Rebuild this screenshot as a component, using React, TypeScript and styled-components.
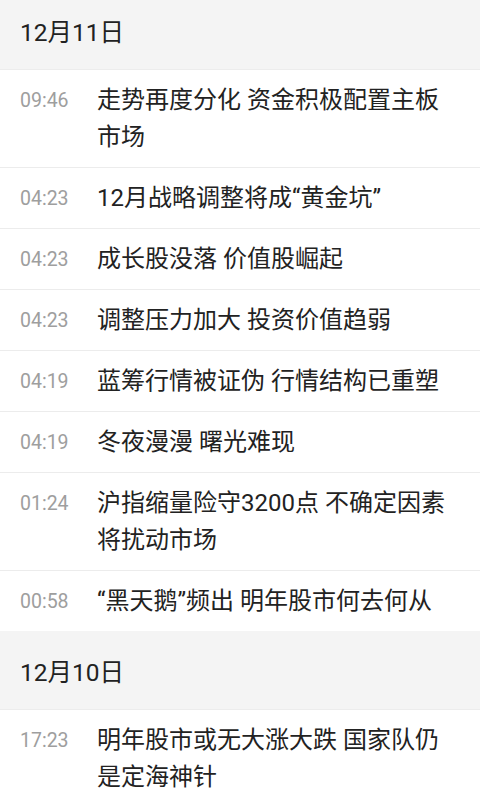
import React from 'react';
import styled, { createGlobalStyle } from 'styled-components';

type NewsItem = {
  time: string;
  title: string;
};

type DayGroup = {
  date: string;
  items: NewsItem[];
};

const days: DayGroup[] = [
  {
    date: '12月11日',
    items: [
      { time: '09:46', title: '走势再度分化 资金积极配置主板市场' },
      { time: '04:23', title: '12月战略调整将成“黄金坑”' },
      { time: '04:23', title: '成长股没落 价值股崛起' },
      { time: '04:23', title: '调整压力加大 投资价值趋弱' },
      { time: '04:19', title: '蓝筹行情被证伪 行情结构已重塑' },
      { time: '04:19', title: '冬夜漫漫 曙光难现' },
      { time: '01:24', title: '沪指缩量险守3200点 不确定因素将扰动市场' },
      { time: '00:58', title: '“黑天鹅”频出 明年股市何去何从' },
    ],
  },
  {
    date: '12月10日',
    items: [{ time: '17:23', title: '明年股市或无大涨大跌 国家队仍是定海神针' }],
  },
];

const GlobalStyle = createGlobalStyle`
  html, body {
    margin: 0;
    padding: 0;
    background: #ffffff;
    overflow: hidden;
  }
  body {
    font-family: Roboto, "Noto Sans CJK SC", sans-serif;
  }
`;

const App = () => {
  return (
    <>
      <GlobalStyle />
      <Page>
        {days.map(day => (
          <Group key={day.date}>
            <DateHeader>{day.date}</DateHeader>
            {day.items.map((item, i) => (
              <Row key={i}>
                <Time>{item.time}</Time>
                <Title>{item.title}</Title>
              </Row>
            ))}
          </Group>
        ))}
      </Page>
    </>
  );
};

const Page = styled.div`
  width: 480px;
  height: 800px;
  overflow: hidden;
  background: #ffffff;
`;

const Group = styled.section`
  &:first-child {
    margin-top: -9px;
  }
`;

const DateHeader = styled.div`
  height: 78px;
  padding-left: 20px;
  display: flex;
  align-items: center;
  background: #f4f4f4;
  border-bottom: 1px solid #ececec;
  font-size: 24.5px;
  color: #222222;
`;

const Row = styled.div`
  display: flex;
  align-items: flex-start;
  padding: 12px 20px 11px 20px;
  border-bottom: 1px solid #ececec;
  &:last-child {
    border-bottom: none;
  }
`;

const Time = styled.div`
  flex: 0 0 77px;
  font-size: 19.5px;
  line-height: 37px;
  color: #9e9e9e;
`;

const Title = styled.div`
  flex: 1;
  font-size: 24px;
  line-height: 37px;
  color: #222222;
`;

export default App;
